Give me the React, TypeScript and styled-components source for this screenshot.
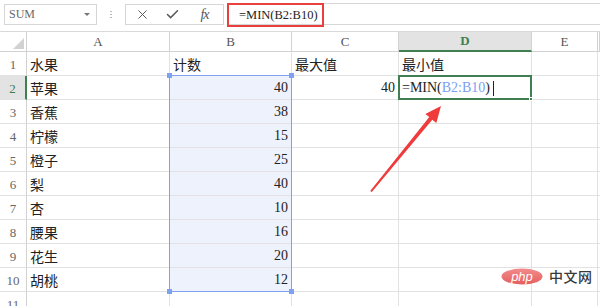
import React from "react";
import styled, { createGlobalStyle, css } from "styled-components";
import { X, Check } from "lucide-react";

const Global = createGlobalStyle`
  html, body { margin: 0; padding: 0; background: #fff; }
  * { box-sizing: border-box; }
`;

const SERIF = `"Liberation Serif", "Noto Sans CJK SC", serif`;
const GREEN = "#3f7f52";
const BLUE = "#7ea2ee";
const GRID = "#e2e2e2";
const HEAD_LINE = "#d2d2d2";

const Root = styled.div`
  position: relative;
  width: 600px;
  height: 306px;
  overflow: hidden;
  background: #fff;
  font-family: ${SERIF};
  color: #222;
`;

const FormulaBar = styled.div`
  display: flex;
  align-items: flex-start;
  height: 31px;
  padding: 3px 0 0 4px;
`;

const NameBox = styled.div`
  width: 93px;
  height: 21px;
  margin-top: 1px;
  border: 1px solid #d6d6d6;
  display: flex;
  align-items: center;
  justify-content: space-between;
  padding: 0 6px 0 4px;
  color: #6a6a6a;
  font-size: 12px;
`;

const Caret = styled.span`
  width: 0;
  height: 0;
  border-left: 3px solid transparent;
  border-right: 3px solid transparent;
  border-top: 3px solid #777;
`;

const Grip = styled.div`
  width: 2px;
  height: 10px;
  margin: 7px 13px 0 13px;
  background-image: radial-gradient(circle, #b8b8b8 0.8px, transparent 1px);
  background-size: 2px 3px;
`;

const IconBox = styled.div`
  width: 99px;
  height: 21px;
  margin-top: 1px;
  border: 1px solid #d6d6d6;
  display: grid;
  grid-template-columns: 32px 28px 37px;
  align-items: center;
  justify-items: center;
  color: #5a5a5a;
`;

const Fx = styled.span`
  font-family: ${SERIF};
  font-style: italic;
  font-size: 14px;
  color: #555;
  letter-spacing: -1px;
`;

const FormulaInput = styled.div`
  flex: 1;
  height: 22px;
  margin-left: 4px;
  border-top: 1px solid #d6d6d6;
  border-bottom: 1px solid #d6d6d6;
  border-left: 1px solid #d6d6d6;
  display: flex;
  align-items: flex-start;
`;

const RedBox = styled.div`
  width: 97px;
  height: 24px;
  margin: -1px 0 0 -2px;
  border: 2px solid #e8403d;
  display: flex;
  align-items: center;
  padding-left: 10px;
  font-size: 12.5px;
  color: #222;
`;

const Sheet = styled.div`
  display: grid;
  grid-template-columns: 27px 143px 122px 107px 133px 66px 2px;
  grid-template-rows: 20px repeat(11, 24px);
  border-top: 1px solid #dadada;
`;

type Pos = { $r: number; $c: number };

const placed = css<Pos>`
  grid-row: ${(p) => p.$r};
  grid-column: ${(p) => p.$c};
`;

const Corner = styled.div<Pos>`
  ${placed}
  position: relative;
  border-right: 1px solid ${HEAD_LINE};
  border-bottom: 1px solid ${HEAD_LINE};
  &::after {
    content: "";
    position: absolute;
    right: 2px;
    bottom: 2px;
    width: 0;
    height: 0;
    border-left: 11px solid transparent;
    border-bottom: 11px solid #d2d2d2;
  }
`;

const ColHead = styled.div<Pos & { $active?: boolean }>`
  ${placed}
  display: flex;
  align-items: center;
  justify-content: center;
  font-size: 13px;
  color: #555;
  border-right: 1px solid ${HEAD_LINE};
  border-bottom: 1px solid ${HEAD_LINE};
  ${(p) =>
    p.$active &&
    css`
      background: #e3e3e3;
      color: ${GREEN};
      font-weight: bold;
      border-bottom: 2px solid ${GREEN};
    `}
`;

const RowHead = styled.div<Pos & { $active?: boolean }>`
  ${placed}
  display: flex;
  align-items: flex-end;
  justify-content: center;
  padding-bottom: 2px;
  font-size: 13px;
  color: #666;
  border-right: 1px solid ${HEAD_LINE};
  border-bottom: 1px solid ${GRID};
  ${(p) =>
    p.$active &&
    css`
      background: #e3e3e3;
      color: ${GREEN};
      border-right: 2px solid ${GREEN};
    `}
`;

const Cell = styled.div<Pos & { $right?: boolean; $sel?: boolean }>`
  ${placed}
  display: flex;
  align-items: center;
  justify-content: ${(p) => (p.$right ? "flex-end" : "flex-start")};
  padding: 1px 3px 0 3px;
  font-size: 14px;
  color: #222;
  white-space: nowrap;
  border-right: 1px solid ${GRID};
  border-bottom: 1px solid ${GRID};
  background: ${(p) => (p.$sel ? "#eef2fc" : "transparent")};
`;

const Ref = styled.span`
  color: #7b9ff0;
`;

const Cursor = styled.span`
  display: inline-block;
  width: 1px;
  height: 15px;
  margin-left: 3px;
  background: #222;
`;

const SelectionFrame = styled.div`
  grid-area: 3 / 3 / 12 / 4;
  position: relative;
  margin: -1px 0 0 -1px;
  border: 1px solid ${BLUE};
  pointer-events: none;
`;

const Handle = styled.span<{ $x: "l" | "r"; $y: "t" | "b" }>`
  position: absolute;
  width: 5px;
  height: 5px;
  background: ${BLUE};
  ${(p) => (p.$x === "l" ? "left: -3px;" : "right: -3px;")}
  ${(p) => (p.$y === "t" ? "top: -3px;" : "bottom: -3px;")}
`;

const ActiveFrame = styled.div`
  grid-area: 3 / 5 / 4 / 6;
  position: relative;
  margin: -1px 0 0 -1px;
  border: 2px solid ${GREEN};
  pointer-events: none;
`;

const FillHandle = styled.span`
  position: absolute;
  right: -3px;
  bottom: -3px;
  width: 4px;
  height: 4px;
  background: ${GREEN};
  border: 1px solid #fff;
`;

const Annotation = styled.svg`
  position: absolute;
  left: 0;
  top: 0;
  pointer-events: none;
`;

const Watermark = styled.div`
  position: absolute;
  left: 501px;
  top: 266px;
  display: flex;
  align-items: center;
  gap: 6px;
  pointer-events: none;
`;

const WatermarkText = styled.span`
  font-family: "Noto Sans CJK SC", sans-serif;
  font-size: 14px;
  font-weight: 500;
  color: #3a3a3a;
  letter-spacing: 0.5px;
`;

const fruits = ["苹果", "香蕉", "柠檬", "橙子", "梨", "杏", "腰果", "花生", "胡桃"];
const counts = [40, 38, 15, 25, 40, 10, 16, 20, 12];
const cols = ["A", "B", "C", "D", "E", ""];

export default function App() {
  const rows: React.ReactNode[] = [];

  // Sheet row 1 (table headers) sits in grid row 2
  rows.push(
    <React.Fragment key="r1">
      <RowHead $r={2} $c={1}>1</RowHead>
      <Cell $r={2} $c={2}>水果</Cell>
      <Cell $r={2} $c={3}>计数</Cell>
      <Cell $r={2} $c={4}>最大值</Cell>
      <Cell $r={2} $c={5}>最小值</Cell>
      <Cell $r={2} $c={6} />
      <Cell $r={2} $c={7} />
    </React.Fragment>
  );

  for (let i = 0; i < 10; i++) {
    const n = i + 2;
    const g = n + 1;
    const hasData = i < 9;
    rows.push(
      <React.Fragment key={`r${n}`}>
        <RowHead $r={g} $c={1} $active={n === 2}>{n}</RowHead>
        <Cell $r={g} $c={2}>{hasData ? fruits[i] : ""}</Cell>
        <Cell $r={g} $c={3} $right $sel={hasData}>{hasData ? counts[i] : ""}</Cell>
        <Cell $r={g} $c={4} $right>{n === 2 ? "40" : ""}</Cell>
        <Cell $r={g} $c={5}>
          {n === 2 && (
            <>
              =MIN(<Ref>B2:B10</Ref>)<Cursor />
            </>
          )}
        </Cell>
        <Cell $r={g} $c={6} />
        <Cell $r={g} $c={7} />
      </React.Fragment>
    );
  }

  return (
    <>
      <Global />
      <Root>
        <FormulaBar>
          <NameBox>
            <span>SUM</span>
            <Caret />
          </NameBox>
          <Grip />
          <IconBox>
            <X size={15} strokeWidth={1.6} />
            <Check size={15} strokeWidth={2.4} />
            <Fx>fx</Fx>
          </IconBox>
          <FormulaInput>
            <RedBox>=MIN(B2:B10)</RedBox>
          </FormulaInput>
        </FormulaBar>

        <Sheet>
          <Corner $r={1} $c={1} />
          {cols.map((c, i) => (
            <ColHead key={i} $r={1} $c={i + 2} $active={c === "D"}>
              {c}
            </ColHead>
          ))}
          {rows}
          <SelectionFrame>
            <Handle $x="l" $y="t" />
            <Handle $x="r" $y="t" />
            <Handle $x="l" $y="b" />
            <Handle $x="r" $y="b" />
          </SelectionFrame>
          <ActiveFrame>
            <FillHandle />
          </ActiveFrame>
        </Sheet>

        <Annotation width="600" height="306" viewBox="0 0 600 306">
          <polygon
            points="370.2,190.9 429.3,117.1 425.3,113.9 441,106 436.3,122.9 432.3,119.7 371.8,192.1"
            fill="#ef3b3b"
          />
        </Annotation>

        <Watermark>
          <svg width="42" height="17" viewBox="0 0 42 17">
            <defs>
              <linearGradient id="phpg" x1="0" y1="0" x2="0" y2="1">
                <stop offset="0" stopColor="#f38b8b" />
                <stop offset="1" stopColor="#e45e5e" />
              </linearGradient>
            </defs>
            <ellipse cx="21" cy="8.5" rx="20.5" ry="8" fill="url(#phpg)" />
            <text
              x="21"
              y="12.5"
              textAnchor="middle"
              fill="#fff"
              fontFamily="'Liberation Sans', sans-serif"
              fontStyle="italic"
              fontSize="13"
            >
              php
            </text>
          </svg>
          <WatermarkText>中文网</WatermarkText>
        </Watermark>
      </Root>
    </>
  );
}
